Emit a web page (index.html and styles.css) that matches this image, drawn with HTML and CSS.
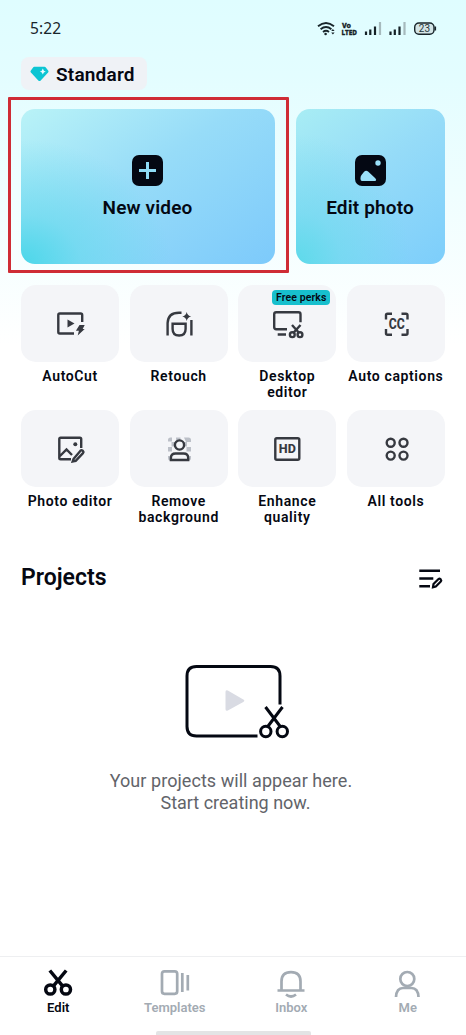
FILE: index.html
```html
<!DOCTYPE html>
<html lang="en">
<head>
<meta charset="utf-8">
<meta name="viewport" content="width=device-width, initial-scale=1">
<title>Edit</title>
<link rel="stylesheet" href="styles.css">
</head>
<body>
<div class="screen">
  <header class="status">
    <span class="clock">5:22</span>
    <svg class="status-icons" width="122" height="20" viewBox="316 19 122 20">
      <g fill="none" stroke="#18252a" stroke-width="1.9">
        <path d="M318 26.2q8-6.6 16 0M320.6 29.2q5.4-4.4 10.8 0M323 32q3-2.3 6 0"/>
      </g>
      <circle cx="325.6" cy="34" r="1.3" fill="#18252a"/>
      <path d="M331.2 31l1.7-2 1.7 2zM331.2 32.5l1.7 2 1.7-2z" fill="#18252a"/>
      <text class="volte" x="342" y="27.7" textLength="9" lengthAdjust="spacingAndGlyphs">Vo</text>
      <text class="volte" x="341.5" y="35" textLength="15.5" lengthAdjust="spacingAndGlyphs">LTED</text>
      <g stroke="#142126" stroke-width="2.2">
        <path d="M366 35v-3.5M370.3 35v-5.5M375 35v-8.5M390.5 35v-3.5M394.8 35v-5.5M399.5 35v-8.5"/>
        <path d="M380 35v-13M404.5 35v-13" stroke="#a6babd"/>
      </g>
      <rect x="414.7" y="23" width="19.3" height="11.2" rx="4.2" fill="#d3e4e6" stroke="#18252a" stroke-width="1.4"/>
      <path d="M435.3 26.5v4" stroke="#18252a" stroke-width="1.6"/>
      <text class="charge" x="424.4" y="32" text-anchor="middle">23</text>
    </svg>
  </header>

  <div class="plan">
    <svg width="19" height="16" viewBox="0 0 19 16"><path d="M4.3.8h10.2q.8 0 1.3.6l2.5 3.4q.6.9-.2 1.7l-7.4 7.9q-1.2 1-2.4 0L.9 6.500q-.8-.8-.2-1.700L3.100 1.400q.4-.6 1.200-.6z" fill="#0cc5d3"/><path d="M12.800 2.500q.5 2.500 3 3-2.500.5-3 3-.5-2.500-3-3 2.500-.5 3-3z" fill="#eafcff"/></svg>
    <span>Standard</span>
  </div>

  <main>
    <section class="actions">
      <button class="card video">
        <svg width="31" height="31" viewBox="0 0 31 31"><rect width="31" height="31" rx="7" fill="#040813"/><path d="M15.500 7v17M7 15.500h17" stroke="#8fdcf6" stroke-width="3"/></svg>
        New video
      </button>
      <button class="card photo">
        <svg width="31" height="31" viewBox="0 0 31 31"><rect width="31" height="31" rx="7" fill="#040813"/><circle cx="23" cy="8" r="2.700" fill="#9adff8"/><path d="M5.500 24v-1q0-2 1.200-3.300l2.200-2.700q2-2.200 4.200-.4l7.200 6.600q1.700 1.700.2 2.800H7q-1.500 0-1.500-2z" fill="#9adff8"/></svg>
        Edit photo
      </button>
      <span class="highlight"></span>
    </section>

    <section class="tools">
      <div class="tool"><div class="tile">
        <svg viewBox="0 0 30 30"><path d="M27.200 13V6q0-1.500-1.500-1.500H4.800q-1.500 0-1.500 1.500v17q0 1.500 1.500 1.500H19"/><path class="solid" d="M12.500 10.500v8l7-4zM24.500 16h5.200l-2 4h2l-7 6.500 1.200-4.700h-3z"/></svg>
      </div><p>AutoCut</p></div>
      <div class="tool"><div class="tile">
        <svg viewBox="0 0 30 30"><path d="M3.600 26.500V14Q4 3.700 15 3.700h2.500M27.400 26.500V11M8.600 14.800h13V20q0 6.500-6.500 6.500T8.600 20z"/><path class="solid" d="M22.700 3q.8 3.800 4.500 4.500-3.700.7-4.500 4.500-.8-3.800-4.500-4.500 3.700-.7 4.500-4.500z"/></svg>
      </div><p>Retouch</p></div>
      <div class="tool"><div class="tile">
        <svg viewBox="0 0 30 30"><path d="M15 20.200H4.200q-2 0-2-2v-13q0-2 2-2h22.300q2 0 2 2v8M5.700 25.500H14M20 16l7.200 8M28.500 16l-7.200 8"/><circle cx="20.300" cy="25.700" r="2.400"/><circle cx="28" cy="25.700" r="2.400"/></svg>
        <span class="badge">Free perks</span>
      </div><p>Desktop<br>editor</p></div>
      <div class="tool"><div class="tile">
        <svg viewBox="0 0 30 30"><path d="M5 10.500V6.200q0-1.500 1.500-1.500H11M20.500 4.700H25q1.500 0 1.500 1.500v4.300M26.500 20v4.300q0 1.500-1.500 1.500h-4.500M11 25.800H6.500q-1.500 0-1.500-1.500V20"/><text class="cc" x="15.800" y="20" text-anchor="middle" textLength="16" lengthAdjust="spacingAndGlyphs">CC</text></svg>
      </div><p>Auto captions</p></div>
      <div class="tool"><div class="tile">
        <svg viewBox="0 0 30 30"><path d="M26.200 14V5q0-1.300-1.300-1.300H5.600Q4.300 3.700 4.300 5v19q0 1.300 1.300 1.300H16M5 22l6.500-6.500 5.500 5.500M18.500 25l7-8.300q1-1 2.100 0l.4.4q1 1 0 2l-7.300 7.700-3 .6z"/><circle class="solid" cx="20.300" cy="10.200" r="2"/></svg>
      </div><p>Photo editor</p></div>
      <div class="tool"><div class="tile">
        <svg viewBox="0 0 30 30"><path class="checks" d="M4 6q0-2.500 2.500-2.500H8v4H4zM12 3.500h4.500v3H12zM20 3.500h4.500Q27 3.500 27 6v2h-5zM7.500 8H11v4.500H7.500zM4 13h4v4.500H4zM19.500 8H23v4.500h-3.500zM22.500 13H27v4.500h-4.500zM4 22h4v4.500H6Q4 26.500 4 24zM23 22h4v2q0 2.500-2.500 2.500H23z"/><circle cx="15.500" cy="11" r="4.600"/><path d="M6.900 26v-2q0-4.500 4.700-4.500h7.900q4.700 0 4.700 4.500V26z"/></svg>
      </div><p>Remove<br>background</p></div>
      <div class="tool"><div class="tile">
        <svg viewBox="0 0 30 30"><rect x="3.300" y="4.300" width="24" height="21.500" rx="1.500"/><text class="hd" x="15.300" y="19.400" text-anchor="middle" textLength="17" lengthAdjust="spacingAndGlyphs">HD</text></svg>
      </div><p>Enhance<br>quality</p></div>
      <div class="tool"><div class="tile">
        <svg viewBox="0 0 30 30"><circle cx="9.700" cy="8.800" r="4"/><circle cx="22.500" cy="8.800" r="4"/><circle cx="9.700" cy="21.600" r="4"/><circle cx="22.500" cy="21.600" r="4"/></svg>
      </div><p>All tools</p></div>
    </section>

    <section class="projects">
      <div class="heading">
        <h1>Projects</h1>
        <svg width="26" height="24" viewBox="418 566 26 24" fill="none" stroke="#050812" stroke-width="2.500"><path d="M419.300 570.700H440M419.300 578.500h14M419.300 586.300H430"/><path stroke-width="2.200" d="M433 587.200l.5-3.200 5-5q1-.8 1.900.1l.5.600q.8.900-.1 1.800l-5 5z"/></svg>
      </div>
      <div class="empty">
        <svg width="106" height="78" viewBox="184 663 106 78" fill="none" stroke="#040812" stroke-width="3"><path d="M280 704.500V676q0-9.500-9.500-9.500H196.500q-9.500 0-9.500 9.500v50.500q0 9.500 9.500 9.500H257.500"/><path d="M225.500 692v17q0 2.500 2.300 1.400l15.500-8.500q2-1.300 0-2.500L227.800 690.600Q225.500 689.400 225.500 692z" fill="#d9dbe3" stroke="none"/><path d="M265.500 707l15.500 20.500M282.500 707l-15.500 20.500"/><circle cx="265.800" cy="731.500" r="5.200"/><circle cx="282.300" cy="731.500" r="5.200"/></svg>
        <p>Your projects will appear here.</p>
        <p class="hint">Start creating now.</p>
      </div>
    </section>
  </main>

  <nav class="tabs">
    <a class="tab active"><svg viewBox="0 0 32 30"><path d="M7.800 2.500l13.300 16.200M24.200 2.500L10.900 18.700"/><circle cx="8.300" cy="21.500" r="4.600"/><circle cx="23.900" cy="21.500" r="4.600"/></svg>Edit</a>
    <a class="tab"><svg viewBox="0 0 32 30"><rect x="3" y="3.300" width="15.200" height="22.500" rx="2.500"/><path d="M23.300 5v19M28.800 7v15.500"/></svg>Templates</a>
    <a class="tab"><svg viewBox="0 0 32 30"><path d="M2.500 22.500h27M6.500 22V13.500Q6.500 4.200 16 4.200T25.500 13.500V22M11 26.500q5 4 10 0"/></svg>Inbox</a>
    <a class="tab"><svg viewBox="0 0 32 30"><circle cx="15.300" cy="11" r="7"/><path d="M4 29q.5-9 7-9h8.500q6.500 0 7 9"/></svg>Me</a>
  </nav>
  <div class="home-bar"></div>
</div>
</body>
</html>
```
FILE: styles.css
```css
* { box-sizing: border-box; }
body { margin: 0; background: #fff; font-family: Roboto, "Noto Sans", sans-serif; color: #050812; }
p, h1 { margin: 0; }
.screen {
  height: 1035px;
  display: flex;
  flex-direction: column;
  overflow: hidden;
  background: linear-gradient(180deg, #dffdff 0, #e3fdff 75px, #effeff 190px, #fff 345px);
}
.status { height: 57px; flex-shrink: 0; display: flex; justify-content: space-between; align-items: flex-start; padding: 19px 28px 0 30px; }
.clock { font: 15.5px/19px "Noto Sans", sans-serif; letter-spacing: .1px; color: #18252a; }
.volte { font: 800 7px "Noto Sans", sans-serif; fill: #142126; stroke: #142126; stroke-width: .3; }
.charge { font: 10px Roboto, sans-serif; fill: #26363a; }
.plan {
  width: 126px; height: 33px; flex-shrink: 0; margin-left: 21px; padding: 1px 0 0 9px;
  display: flex; align-items: center; gap: 7px;
  background: #eff2f6; border-radius: 8px;
  font-size: 19px; font-weight: 600; letter-spacing: .2px;
}
.actions { position: relative; display: grid; grid-template-columns: 254px 149px; justify-content: space-between; height: 155px; margin: 19px 21px 0; }
.card {
  display: flex; flex-direction: column; align-items: center; gap: 11px;
  padding: 46px 0 0; border: 0; border-radius: 14px;
  font: 600 19px/22px Roboto, sans-serif; letter-spacing: .15px; color: #040813;
}
.video { padding-right: 1px; background: radial-gradient(ellipse 150px 125px at 0 100%, #4bd7e9 0, #5fdaec90 40%, transparent 100%), linear-gradient(145deg, #b9f3f7 0, #97dcf8 45%, #7dcafb 100%); }
.photo { padding-right: 1px; background: radial-gradient(ellipse 115px 130px at 0 100%, #5ddaea 0, #6adbed90 40%, transparent 100%), linear-gradient(145deg, #a8edf4 0, #95dbf8 45%, #7dcefb 100%); }
.highlight { position: absolute; left: -13px; top: -12px; width: 281px; height: 176px; border: 3px solid #cf2c35; border-radius: 1px; }
.tools { display: grid; grid-template-columns: repeat(4, 98.2px); grid-template-rows: 125px 126px; justify-content: space-between; margin: 21px 21px 0; }
.tile { position: relative; height: 77px; display: flex; align-items: center; justify-content: center; background: #f4f5f8; border-radius: 15px; }
.tile svg { width: 30px; height: 30px; overflow: visible; fill: none; stroke: #363940; stroke-width: 2.4; }
.tile .solid { fill: #363940; stroke: none; }
.tile .checks { fill: #bcc0c8; stroke: none; }
.tile text { fill: #363940; stroke: none; font-family: Roboto, sans-serif; font-weight: 800; }
.tile .hd { font-size: 12.5px; }
.tile .cc { font-size: 14px; }
.tool p { margin: 6px -5px 0; text-align: center; font-size: 14px; line-height: 16px; font-weight: 600; letter-spacing: .62px; }
.badge { position: absolute; top: 5px; left: 34px; width: 58px; height: 15px; border-radius: 4px; background: #17bfcd; text-align: center; font-size: 10.5px; line-height: 15px; font-weight: 600; letter-spacing: .1px; }
.heading { display: flex; justify-content: space-between; align-items: center; height: 30px; padding: 0 22px 0 21px; margin-top: 27px; }
.heading h1 { font-size: 23px; line-height: 30px; font-weight: 600; }
.empty { display: flex; flex-direction: column; align-items: center; margin-top: 70px; padding-left: 8px; }
.empty p { margin: 29px 12px 0 0; font-size: 18px; line-height: 21.5px; letter-spacing: .05px; color: #62646a; }
.empty .hint { margin: 0 3px 0 0; letter-spacing: 0; }
.tabs { display: grid; grid-template-columns: repeat(4, 1fr); height: 75px; margin-top: auto; border-top: 1px solid #eeeff1; background: #fff; padding-top: 11px; flex-shrink: 0; }
.tab { display: flex; flex-direction: column; align-items: center; gap: 2px; font-size: 13px; line-height: 16px; font-weight: 600; letter-spacing: 0; color: #a3abb3; }
.tab svg { width: 32px; height: 30px; fill: none; stroke: currentColor; stroke-width: 2.7; }
.active { color: #050812; }
.active svg { stroke-width: 3.5; }
.home-bar { width: 155px; height: 4px; flex-shrink: 0; align-self: center; background: #e3e4e5; border-radius: 2px 2px 0 0; }
```
